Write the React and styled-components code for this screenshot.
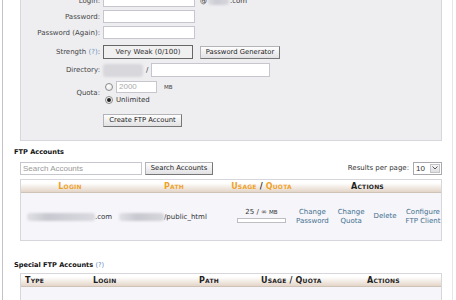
import React from 'react';
import styled, { createGlobalStyle } from 'styled-components';

const Global = createGlobalStyle`
  html, body { margin: 0; padding: 0; background: #fff; overflow: hidden; }
  body { font-family: "DejaVu Sans", Verdana, sans-serif; font-size: 7px; color: #333; }
  * { box-sizing: border-box; }
`;

const Page = styled.div`
  margin-left: 2px;
  width: 451px;
  height: 300px;
  border-left: 1px solid #c2c2c8;
  border-right: 1px solid #e6e6ea;
  padding: 0 10px 0 11px;
  overflow: hidden;
`;

const Panel = styled.div`
  margin: -20px 0 0 6px;
  background: #eeeef1;
  border: 1px solid #d6d6dc;
  padding: 13px 0 13px 0;
  display: flex;
  flex-direction: column;
`;

const Row = styled.div`
  display: flex;
  align-items: center;
  gap: 3px;
  margin-top: ${p => p.$mt ?? 0}px;
  min-height: ${p => p.$h ?? 13}px;
`;

const Label = styled.div`
  width: 79px;
  flex: none;
  text-align: right;
  color: #444;
  white-space: nowrap;
`;

const Help = styled.span`
  color: #6a8fc0;
`;

const Field = styled.input`
  width: ${p => p.$w}px;
  height: ${p => p.$h ?? 13}px;
  border: 1px solid #c6c6ce;
  background: #fff;
  padding: 0 2px;
  margin: 0;
  font-family: "Liberation Sans", Arial, sans-serif;
  font-size: 8px;
  color: ${p => (p.$muted ? '#aaa' : '#333')};
  outline: none;
  &::placeholder { color: #9a9a9a; }
`;

const Redacted = styled.span`
  display: inline-block;
  width: ${p => p.$w}px;
  height: ${p => p.$h ?? 9}px;
  background: ${p => p.$bg ?? 'linear-gradient(90deg, #dcdce0, #ccccd4 40%, #d6d6dc)'};
  border-radius: 3px;
  filter: blur(1px);
`;

const Inline = styled.span`
  display: inline-flex;
  align-items: center;
  gap: ${p => p.$gap ?? 0}px;
  margin-left: ${p => p.$ml ?? 0}px;
`;

const StrengthBox = styled.div`
  width: 90px;
  height: 14px;
  border: 1px solid #666;
  background: #f0f0f0;
  display: flex;
  align-items: center;
  justify-content: center;
  color: #333;
`;

const Button = styled.button`
  height: 13px;
  width: ${p => (p.$w ? `${p.$w}px` : 'auto')};
  margin: 0 0 0 ${p => p.$ml ?? 0}px;
  padding: 0 4px;
  font-family: "DejaVu Sans", Verdana, sans-serif;
  font-size: 6.8px;
  color: #222;
  background: linear-gradient(#fdfdfd, #e2e2e4);
  border: 1px solid #b4b4b8;
  border-right-color: #777;
  border-bottom-color: #777;
  white-space: nowrap;
  line-height: 1;
`;

const QuotaOptions = styled.div`
  display: flex;
  flex-direction: column;
  gap: 1px;
`;

const Option = styled.div`
  display: flex;
  align-items: center;
  gap: 3px;
  height: ${p => p.$h}px;
  padding-left: 2px;
`;

const Radio = styled.span`
  width: 8px;
  height: 8px;
  border-radius: 50%;
  border: 1px solid #8c8c8c;
  background: radial-gradient(circle at 40% 35%, #fff, #e4e4e4);
  display: inline-flex;
  align-items: center;
  justify-content: center;
  flex: none;
  &::after {
    content: '';
    width: 4px;
    height: 4px;
    border-radius: 50%;
    background: ${p => (p.$checked ? '#222' : 'transparent')};
  }
`;

const Unit = styled.span`
  font-size: 5.6px;
  color: #444;
  margin-left: 4px;
`;

const Heading = styled.div`
  font-weight: bold;
  font-size: 6.6px;
  line-height: 10px;
  color: #111;
  margin-top: ${p => p.$mt}px;
`;

const SearchBar = styled.div`
  margin: 4px 0 0 6px;
  display: flex;
  align-items: center;
  gap: 3px;
  height: 14px;
`;

const PerPage = styled.div`
  margin-left: auto;
  display: flex;
  align-items: center;
  gap: 4px;
  color: #333;
`;

const Select = styled.div`
  width: 29px;
  height: 13px;
  border: 1px solid #a8a8ae;
  background: #fff;
  display: flex;
  align-items: center;
  justify-content: space-between;
  padding: 0 1px 0 2px;
  font-family: "Liberation Sans", Arial, sans-serif;
  font-size: 8px;
`;

const SelectArrow = styled.span`
  width: 10px;
  height: 9px;
  border: 1px solid #c4c4c8;
  background: linear-gradient(#f6f6f8, #dedee2);
  display: flex;
  align-items: center;
  justify-content: center;
`;

const Table = styled.div`
  margin: ${p => p.$mt}px 0 0 6px;
  border: 1px solid #d6d6dc;
  background: #f5f5fa;
`;

const HeadRow = styled.div`
  display: grid;
  grid-template-columns: ${p => p.$cols};
  height: 13px;
  align-items: center;
  background: linear-gradient(#ffffff, #ffffff 25%, #e4d5c8);
  border-bottom: 1px solid #cfc2b6;
`;

const HeadCell = styled.div`
  font-weight: bold;
  font-variant: small-caps;
  font-size: 8px;
  letter-spacing: 0.2px;
  text-align: ${p => p.$align ?? 'center'};
  padding-left: ${p => p.$pl ?? 0}px;
  color: ${p => (p.$accent ? '#eea22a' : '#1e1e1e')};
  white-space: nowrap;
`;

const Dark = styled.span`
  color: #1e1e1e;
`;

const BodyRow = styled.div`
  display: grid;
  grid-template-columns: ${p => p.$cols};
  height: ${p => p.$h}px;
  align-items: center;
`;

const Cell = styled.div`
  display: flex;
  align-items: center;
  justify-content: ${p => p.$justify ?? 'flex-start'};
  padding-left: ${p => p.$pl ?? 0}px;
  color: #333;
  white-space: nowrap;
`;

const Usage = styled.div`
  display: flex;
  flex-direction: column;
  align-items: center;
  gap: 2px;
  margin-top: -2px;
  width: 100%;
`;

const Small = styled.span`
  font-size: 5.6px;
`;

const Bar = styled.div`
  width: 49px;
  height: 5px;
  border: 1px solid #bdbdc2;
  background: #fff;
`;

const Actions = styled.div`
  display: flex;
  align-items: center;
  gap: 9px;
  padding-left: 2px;
`;

const ActionLink = styled.a`
  color: #44708f;
  text-align: center;
  line-height: 9px;
  text-decoration: none;
`;

const cols1 = '98px 110px 65px 1fr';
const cols2 = '67px 106px 62px 106px 1fr';

export default function App() {
  return (
    <>
      <Global />
      <Page>
        <Panel>
          <Row $h={13}>
            <Label>Login:</Label>
            <Field $w={92} />
            <Inline $ml={2} $gap={1}>
              @ <Redacted $w={21} $h={8} /> .com
            </Inline>
          </Row>
          <Row $mt={3}>
            <Label>Password:</Label>
            <Field type="password" $w={92} />
          </Row>
          <Row $mt={3}>
            <Label>Password (Again):</Label>
            <Field type="password" $w={92} />
          </Row>
          <Row $mt={6} $h={14}>
            <Label>
              Strength <Help>(?)</Help>:
            </Label>
            <StrengthBox>Very Weak (0/100)</StrengthBox>
            <Button $ml={4} $w={80}>Password Generator</Button>
          </Row>
          <Row $mt={4} $h={14}>
            <Label>Directory:</Label>
            <Redacted $w={40} $h={13} $bg="#d8d8dc" />
            <span>/</span>
            <Field $w={119} $h={14} />
          </Row>
          <Row $mt={3} $h={25}>
            <Label>Quota:</Label>
            <QuotaOptions>
              <Option $h={13}>
                <Radio />
                <Field $w={41} $h={12} $muted defaultValue="2000" />
                <Unit>MB</Unit>
              </Option>
              <Option $h={11}>
                <Radio $checked />
                <span>Unlimited</span>
              </Option>
            </QuotaOptions>
          </Row>
          <Row $mt={9}>
            <Label />
            <Button $w={79}>Create FTP Account</Button>
          </Row>
        </Panel>

        <Heading $mt={6}>FTP Accounts</Heading>
        <SearchBar>
          <Field $w={122} placeholder="Search Accounts" />
          <Button $w={68}>Search Accounts</Button>
          <PerPage>
            Results per page:
            <Select>
              10
              <SelectArrow>
                <svg width="6" height="4" viewBox="0 0 6 4">
                  <polyline points="0.5,0.5 3,3 5.5,0.5" fill="none" stroke="#555" strokeWidth="1" />
                </svg>
              </SelectArrow>
            </Select>
          </PerPage>
        </SearchBar>

        <Table $mt={4}>
          <HeadRow $cols={cols1}>
            <HeadCell $accent>Login</HeadCell>
            <HeadCell $accent>Path</HeadCell>
            <HeadCell $accent>
              Usage <Dark>/</Dark> Quota
            </HeadCell>
            <HeadCell>Actions</HeadCell>
          </HeadRow>
          <BodyRow $cols={cols1} $h={47}>
            <Cell $pl={6}>
              <Redacted $w={68} $h={8} $bg="linear-gradient(90deg,#e0e0e6,#c8c8d0 30%,#d0d0d8 60%,#dadae0)" />
              <span>.com</span>
            </Cell>
            <Cell>
              <Redacted $w={45} $h={8} $bg="linear-gradient(90deg,#e0e0e6,#c8c8d0 40%,#d6d6dc)" />
              <span>/public_html</span>
            </Cell>
            <Cell $justify="center">
              <Usage>
                <span>
                  25 / ∞ <Small>MB</Small>
                </span>
                <Bar />
              </Usage>
            </Cell>
            <Cell>
              <Actions>
                <ActionLink>Change<br />Password</ActionLink>
                <ActionLink>Change<br />Quota</ActionLink>
                <ActionLink>Delete</ActionLink>
                <ActionLink>Configure<br />FTP Client</ActionLink>
              </Actions>
            </Cell>
          </BodyRow>
        </Table>

        <Heading $mt={19}>
          Special FTP Accounts <Help style={{ fontWeight: 'normal' }}>(?)</Help>
        </Heading>
        <Table $mt={3}>
          <HeadRow $cols={cols2}>
            <HeadCell $align="left" $pl={4}>Type</HeadCell>
            <HeadCell $align="left" $pl={5}>Login</HeadCell>
            <HeadCell $align="left" $pl={5}>Path</HeadCell>
            <HeadCell $align="left" $pl={5}>Usage / Quota</HeadCell>
            <HeadCell $align="left" $pl={5}>Actions</HeadCell>
          </HeadRow>
          <BodyRow $cols={cols2} $h={40} />
        </Table>
      </Page>
    </>
  );
}
